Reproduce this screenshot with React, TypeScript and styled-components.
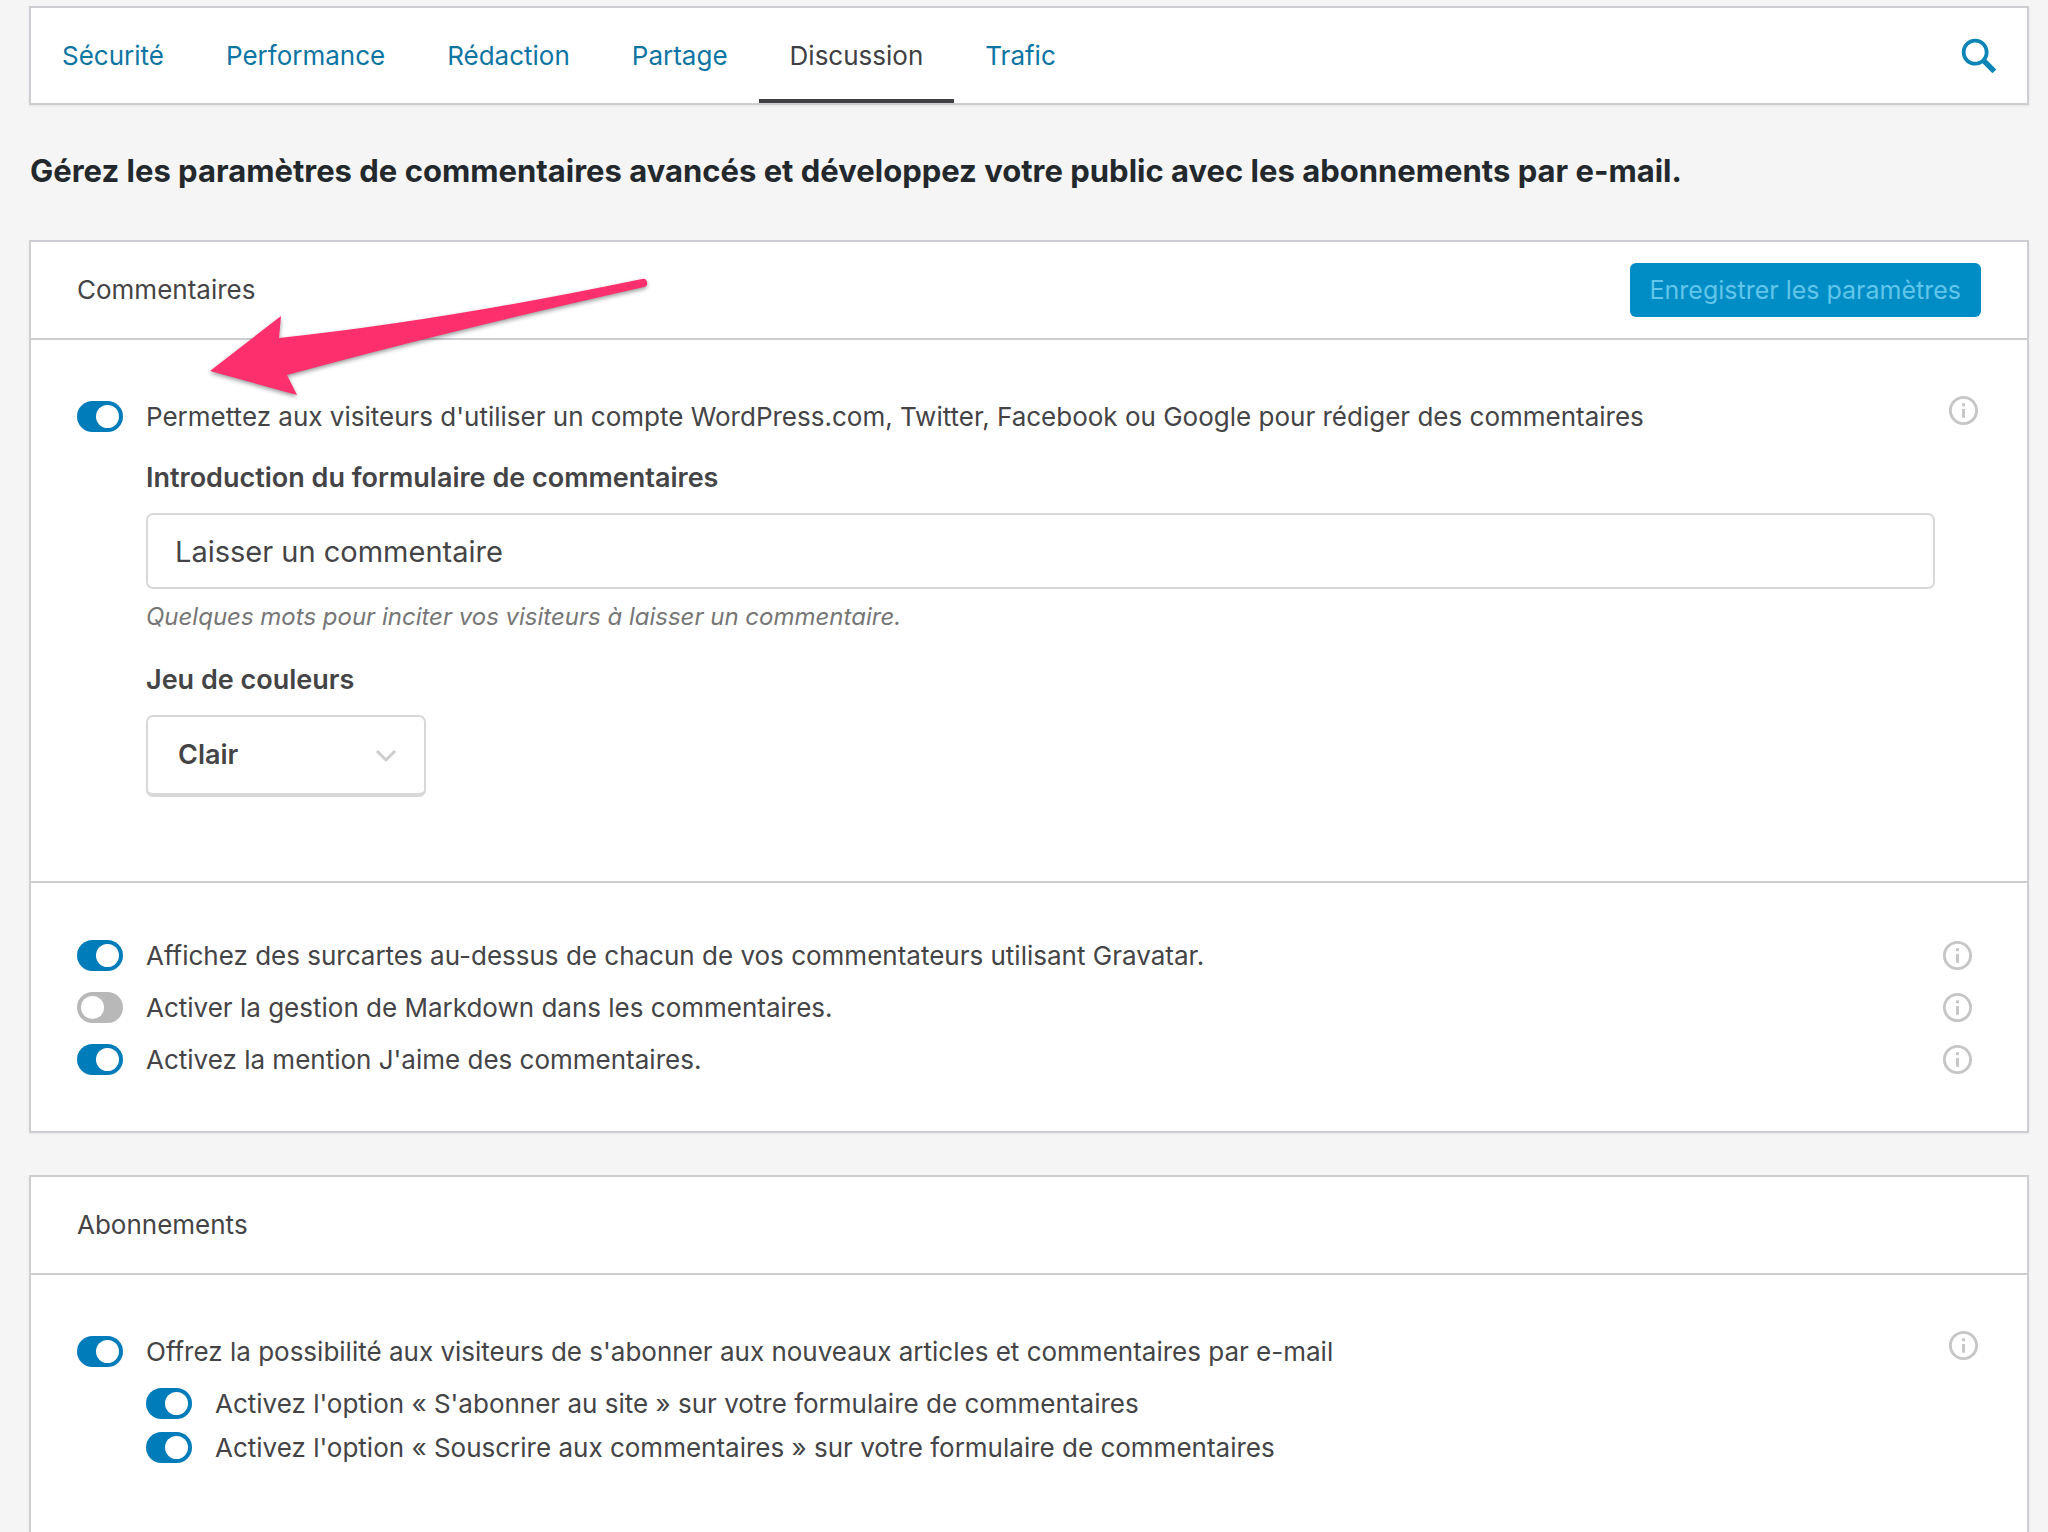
import React, { useId, useState } from "react";
import styled, { createGlobalStyle } from "styled-components";

const GlobalStyle = createGlobalStyle`
  *, *::before, *::after { box-sizing: border-box; }
  body {
    margin: 0;
    background: #f5f5f5;
    color: #444446;
    font-family: Inter, "Liberation Sans", sans-serif;
    font-size: 26px;
    line-height: 32px;
  }
  button, input, select { font: inherit; color: inherit; }
`;

const Page = styled.div`
  position: relative;
  display: flex;
  flex-direction: column;
  min-height: 100vh;
  padding: 6px 19px 0 29px;
`;

const NavBar = styled.nav`
  display: flex;
  align-items: stretch;
  height: 99px;
  background: #fff;
  border: 2px solid #cdced1;
  box-shadow: 0 1px 2px rgba(0, 0, 0, 0.08);
`;

const TabList = styled.div`
  display: flex;
  flex: 1;
`;

const Tab = styled.a<{ $active?: boolean }>`
  display: flex;
  align-items: center;
  padding: 0 31px;
  border-top: 4px solid transparent;
  border-bottom: 4px solid ${(p) => (p.$active ? "#404044" : "transparent")};
  color: ${(p) => (p.$active ? "#404044" : "#0e75a3")};
  text-decoration: none;
`;

const SearchButton = styled.button`
  display: grid;
  place-items: center;
  margin: 0;
  padding: 0 25px;
  border: 0;
  background: none;
  cursor: pointer;

  svg {
    width: 46px;
    height: 46px;
    fill: #0c85b6;
  }
`;

const PageTitle = styled.h1`
  margin: 46px 0 49px 1px;
  color: #23282d;
  font-size: 31px;
  line-height: 40px;
  font-weight: 700;
`;

const Card = styled.section<{ $last?: boolean }>`
  display: flex;
  flex-direction: column;
  margin-bottom: ${(p) => (p.$last ? 0 : 42)}px;
  flex: ${(p) => (p.$last ? "1 0 auto" : "none")};
  background: #fff;
  border: 2px solid #cdced1;
  border-bottom-width: ${(p) => (p.$last ? 0 : 2)}px;
  box-shadow: 0 1px 2px rgba(0, 0, 0, 0.06);
`;

const CardHeader = styled.header`
  display: flex;
  align-items: center;
  justify-content: space-between;
  height: 98px;
  padding: 0 46px;
  border-bottom: 2px solid #cdced1;
`;

const CardTitle = styled.h2`
  margin: 0;
  font-size: 26px;
  font-weight: 400;
`;

const SaveButton = styled.button`
  height: 54px;
  padding: 0 20px;
  border: 0;
  border-radius: 6px;
  background: #008dc5;
  font-size: 25px;

  &:disabled {
    color: #62c5ea;
  }
`;

const Group = styled.div<{ $compact?: boolean }>`
  display: flex;
  align-items: flex-start;
  padding: ${(p) => (p.$compact ? "57px 52px 56px 46px" : "50px 46px 68px")};

  & + & {
    border-top: 2px solid #cdced1;
  }
`;

const Fields = styled.div`
  flex: 1;
  min-width: 0;
  padding-top: 11px;
`;

const Rows = styled.div`
  display: flex;
  flex: 1;
  flex-direction: column;
  gap: 21px;
`;

const Row = styled.div`
  display: flex;
  align-items: center;
  justify-content: space-between;
  height: 31px;
`;

const ToggleLabel = styled.label`
  display: flex;
  align-items: center;
  gap: 23px;
  height: 31px;
  cursor: pointer;
`;

const Switch = styled.input`
  appearance: none;
  flex: none;
  display: flex;
  width: 46px;
  height: 31px;
  margin: 0;
  padding: 4px;
  border-radius: 16px;
  background: #b8b8b8;
  cursor: pointer;

  &::before {
    content: "";
    width: 23px;
    height: 23px;
    border-radius: 50%;
    background: #fff;
  }

  &:checked {
    justify-content: flex-end;
    background: #007cba;
  }
`;

const InfoButton = styled.button`
  display: grid;
  place-items: center;
  flex: none;
  margin: 0;
  padding: 0;
  border: 0;
  background: none;
  cursor: pointer;

  svg {
    width: 35px;
    height: 35px;
    fill: #c6c6c6;
  }
`;

const InfoColumn = styled.div`
  display: flex;
  justify-content: flex-end;
  width: 46px;
  padding-top: 3px;
`;

const Nested = styled.div`
  display: flex;
  flex-direction: column;
  padding: 0 0 16px 69px;
`;

const NestedToggles = styled(Nested)`
  gap: 13px;
  padding-top: 21px;
  padding-bottom: 0;
`;

const FieldLabel = styled.label`
  margin: 30px 0 19px;
  font-size: 27px;
  font-weight: 600;
`;

const TextInput = styled.input`
  width: 100%;
  height: 76px;
  padding: 0 27px;
  border: 2px solid #d8d8d8;
  border-radius: 7px;
  background: #fff;
  font-size: 29px;
  outline: 0;
`;

const Hint = styled.p`
  margin: 12px 0 1px;
  color: #767676;
  font-size: 24px;
  font-style: italic;
`;

const SelectBox = styled.div`
  display: grid;
  align-items: center;
  width: 280px;

  select,
  svg {
    grid-area: 1 / 1;
  }

  select {
    appearance: none;
    width: 100%;
    height: 82px;
    padding: 0 64px 0 30px;
    border: 2px solid #d8d8d8;
    border-bottom-width: 4px;
    border-radius: 7px;
    background: #fff;
    font-size: 27px;
    font-weight: 600;
    outline: 0;
  }

  svg {
    justify-self: end;
    width: 22px;
    height: 14px;
    margin-right: 29px;
    fill: none;
    stroke: #cdcdcd;
    stroke-width: 3;
    pointer-events: none;
  }
`;

const Arrow = styled.svg`
  position: absolute;
  top: 270px;
  left: 200px;
  width: 460px;
  height: 135px;
  fill: #fd306d;
  filter: drop-shadow(0 2px 2px rgba(0, 0, 0, 0.4));
  pointer-events: none;
`;

const SearchIcon = () => (
  <svg viewBox="0 0 24 24" aria-hidden="true">
    <path d="M21 19l-5.154-5.154C16.574 12.742 17 11.42 17 10c0-3.866-3.134-7-7-7s-7 3.134-7 7 3.134 7 7 7c1.42 0 2.742-.426 3.846-1.154L19 21l2-2zM5 10c0-2.757 2.243-5 5-5s5 2.243 5 5-2.243 5-5 5-5-2.243-5-5z" />
  </svg>
);

const Info = () => (
  <InfoButton type="button" aria-label="En savoir plus">
    <svg viewBox="0 0 24 24" aria-hidden="true">
      <path d="M13 9h-2V7h2v2zm0 2h-2v6h2v-6zm-1-7c-4.411 0-8 3.589-8 8s3.589 8 8 8 8-3.589 8-8-3.589-8-8-8m0-2c5.523 0 10 4.477 10 10s-4.477 10-10 10S2 17.523 2 12 6.477 2 12 2z" />
    </svg>
  </InfoButton>
);

function Toggle({ label, on = true }: { label: string; on?: boolean }) {
  const id = useId();
  const [checked, setChecked] = useState(on);
  return (
    <ToggleLabel htmlFor={id}>
      <Switch
        id={id}
        type="checkbox"
        role="switch"
        checked={checked}
        onChange={(e) => setChecked(e.target.checked)}
      />
      <span>{label}</span>
    </ToggleLabel>
  );
}

const tabs = ["Sécurité", "Performance", "Rédaction", "Partage", "Discussion", "Trafic"];

const commentOptions = [
  { label: "Affichez des surcartes au-dessus de chacun de vos commentateurs utilisant Gravatar.", on: true },
  { label: "Activer la gestion de Markdown dans les commentaires.", on: false },
  { label: "Activez la mention J'aime des commentaires.", on: true },
];

export default function App() {
  return (
    <>
      <GlobalStyle />
      <Page>
        <NavBar>
          <TabList>
            {tabs.map((tab) => (
              <Tab key={tab} href="#" $active={tab === "Discussion"}>
                {tab}
              </Tab>
            ))}
          </TabList>
          <SearchButton type="button" aria-label="Rechercher">
            <SearchIcon />
          </SearchButton>
        </NavBar>

        <PageTitle>
          Gérez les paramètres de commentaires avancés et développez votre public avec les abonnements par e-mail.
        </PageTitle>

        <Card>
          <CardHeader>
            <CardTitle>Commentaires</CardTitle>
            <SaveButton type="button" disabled>
              Enregistrer les paramètres
            </SaveButton>
          </CardHeader>
          <Group>
            <Fields>
              <Toggle label="Permettez aux visiteurs d'utiliser un compte WordPress.com, Twitter, Facebook ou Google pour rédiger des commentaires" />
              <Nested>
                <FieldLabel htmlFor="intro">Introduction du formulaire de commentaires</FieldLabel>
                <TextInput id="intro" type="text" defaultValue="Laisser un commentaire" />
                <Hint>Quelques mots pour inciter vos visiteurs à laisser un commentaire.</Hint>
                <FieldLabel htmlFor="scheme">Jeu de couleurs</FieldLabel>
                <SelectBox>
                  <select id="scheme" defaultValue="Clair">
                    <option>Clair</option>
                  </select>
                  <svg viewBox="0 0 22 14" aria-hidden="true">
                    <path d="M2 2l9 9 9-9" />
                  </svg>
                </SelectBox>
              </Nested>
            </Fields>
            <InfoColumn>
              <Info />
            </InfoColumn>
          </Group>
          <Group $compact>
            <Rows>
              {commentOptions.map((option) => (
                <Row key={option.label}>
                  <Toggle {...option} />
                  <Info />
                </Row>
              ))}
            </Rows>
          </Group>
        </Card>

        <Card $last>
          <CardHeader>
            <CardTitle>Abonnements</CardTitle>
          </CardHeader>
          <Group>
            <Fields>
              <Toggle label="Offrez la possibilité aux visiteurs de s'abonner aux nouveaux articles et commentaires par e-mail" />
              <NestedToggles>
                <Toggle label="Activez l'option « S'abonner au site » sur votre formulaire de commentaires" />
                <Toggle label="Activez l'option « Souscrire aux commentaires » sur votre formulaire de commentaires" />
              </NestedToggles>
            </Fields>
            <InfoColumn>
              <Info />
            </InfoColumn>
          </Group>
        </Card>

        <Arrow viewBox="200 270 460 135" aria-hidden="true">
          <path d="M210 371L281 316L279 338Q440 321 642 279A4 4 0 0 1 644 287Q440 333 287 375L297 395Z" />
        </Arrow>
      </Page>
    </>
  );
}
